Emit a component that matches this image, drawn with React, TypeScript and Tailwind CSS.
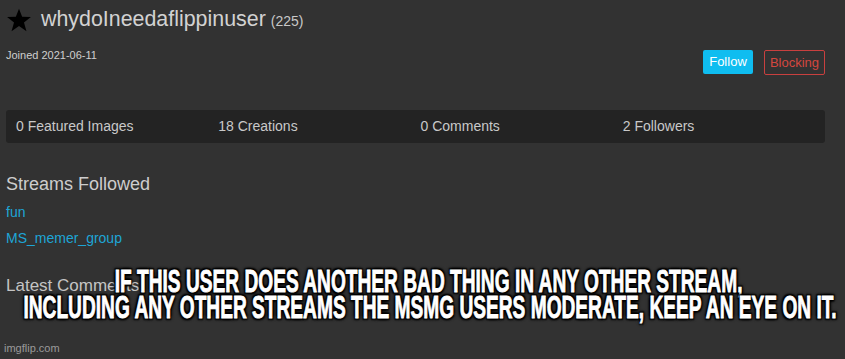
const Star = () => (
    <svg width="26" height="26" viewBox="0 0 24 24" className="shrink-0">
        <polygon points="12,1.5 14.9,9 23,9.3 16.6,14.3 18.9,22.3 12,17.6 5.1,22.3 7.4,14.3 1,9.3 9.1,9" fill="#000" />
    </svg>
);

const stats = ['0 Featured Images', '18 Creations', '0 Comments', '2 Followers'];

const App = () => {
    return (
        <div
            className="relative w-[845px] h-[359px] overflow-hidden bg-[#323232] text-[#cfcfcf]"
            style={{ fontFamily: '"Liberation Sans", Arial, sans-serif' }}
        >
            <div className="pl-[6px] pr-[20px]">
                <div className="flex items-center pt-[5px] h-[34px]">
                    <Star />
                    <span className="ml-[9px] text-[21.4px] leading-none text-[#d2d2d2]">whydoIneedaflippinuser</span>
                    <span className="ml-[5px] text-[14px] leading-none text-[#c8c8c8] mt-[3px]">(225)</span>
                </div>
                <div className="flex items-start justify-between mt-[11px]">
                    <span className="text-[11px] leading-none text-[#cfcfcf] mt-[5px]">Joined 2021-06-11</span>
                    <div className="flex gap-[11px] mt-[5px]">
                        <button className="h-[24px] w-[50px] rounded-[2px] bg-[#0fbdf0] text-[13px] text-white">Follow</button>
                        <button className="h-[25px] w-[61px] rounded-[2px] border border-[#c9403f] text-[13px] text-[#d4473f]">Blocking</button>
                    </div>
                </div>
                <div className="mt-[35px] h-[33px] rounded-[3px] bg-[#232323] grid grid-cols-4 items-center pl-[10px]">
                    {stats.map((s) => (
                        <span key={s} className="text-[14px] text-[#c9c9c9]">{s}</span>
                    ))}
                </div>
                <div className="mt-[32px] text-[18px] leading-none text-[#cdcdcd]">Streams Followed</div>
                <div className="mt-[12px] text-[14px] leading-none text-[#1ea5d6]">fun</div>
                <div className="mt-[12px] text-[14px] leading-none text-[#1ea5d6]">MS_memer_group</div>
                <div className="mt-[32px] text-[17px] leading-none text-[#c4c4c4]">Latest Comments</div>
            </div>
            <div className="absolute left-[4px] top-[343px] text-[11px] leading-none text-[#9a9a9a]">imgflip.com</div>
            <div
                className="absolute left-0 right-0 top-[268px] flex flex-col items-center text-white text-[29px] leading-[26px] font-bold whitespace-nowrap"
                style={{
                    fontFamily: '"Liberation Sans", Arial, sans-serif',
                    WebkitTextStroke: '0.8px #fff',
                    textShadow:
                        '2px 2px 2px #000, -2px -2px 2px #000, 2px -2px 2px #000, -2px 2px 2px #000, 0 0 5px #000',
                }}
            >
                <div className="scale-x-[0.66] scale-y-[1.08] ml-[12px]">IF THIS USER DOES ANOTHER BAD THING IN ANY OTHER STREAM,</div>
                <div className="scale-x-[0.66] scale-y-[1.08] ml-[16px]">INCLUDING ANY OTHER STREAMS THE MSMG USERS MODERATE, KEEP AN EYE ON IT.</div>
            </div>
        </div>
    );
};

export default App;
